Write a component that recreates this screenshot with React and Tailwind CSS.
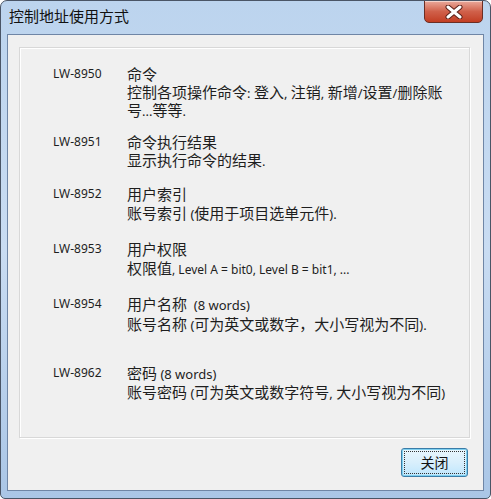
import React from "react";

const CJK = "font-['Microsoft_YaHei','Noto_Sans_CJK_SC','Noto_Sans',sans-serif]";
const LAT = "font-['Noto_Sans','Open_Sans','Noto_Sans_CJK_SC',sans-serif]";

function Row({ label, title, desc, rowClass, descClass }) {
  return (
    <div className={"flex " + rowClass}>
      <div className={"w-[107px] pl-[33px] shrink-0 h-[18px] text-[12px] leading-[18px] text-[#1e1e1e] " + LAT}>
        {label}
      </div>
      <div className={"w-[328px] text-[15px] leading-[18px] text-[#1e1e1e] " + CJK}>
        <div className="h-[18px]">{title}</div>
        <div className={descClass}>{desc}</div>
      </div>
    </div>
  );
}

function L({ children, size = "text-[13px]" }) {
  return <span className={LAT + " leading-none " + size}>{children}</span>;
}

export default function App() {
  return (
    <div className="w-[491px] h-[499px] relative overflow-hidden rounded-t-[7px] rounded-b-[5px] border border-[#4a5566] bg-gradient-to-b from-[#bcd4ee] via-[#c9dcf2] to-[#aac6e6] flex flex-col">
      {/* title bar */}
      <div className={"h-[33px] shrink-0 flex items-center pl-[8px] pb-[2px] text-[15px] text-[#111] " + CJK}>
        控制地址使用方式
      </div>
      {/* close button */}
      <div className="absolute left-[423px] top-[-1px] w-[59px] h-[23px] rounded-b-[5px] border border-[#6b2e24] bg-gradient-to-b from-[#e9a99b] via-[#d0604a] to-[#c23d22] flex items-center justify-center shadow-[inset_0_1px_0_rgba(255,255,255,0.5)]">
        <svg width="18" height="14" viewBox="0 0 18 14">
          <path d="M3 2 L15 12 M15 2 L3 12" stroke="#5a2018" strokeWidth="5" strokeLinecap="round" />
          <path d="M3 2 L15 12 M15 2 L3 12" stroke="#ffffff" strokeWidth="3" strokeLinecap="round" />
        </svg>
      </div>
      {/* client area */}
      <div className="mx-[6px] h-[457px] border border-[#6f86a6] bg-[#f0f0f0] flex flex-col">
        <div className="ml-[11px] mr-[13px] mt-[12px] h-[391px] border border-[#d8d8d8] shadow-[inset_1px_1px_0_#ffffff,1px_1px_0_#ffffff] bg-[#f0f0f0]">
          <div className="pt-[17px]">
            <Row
              label="LW-8950"
              title="命令"
              desc={<>控制各项操作命令<L>: </L>登入<L>, </L>注销<L>, </L>新增<L>/</L>设置<L>/</L>删除账号<L>...</L>等等<L>.</L></>}
              rowClass="mt-0"
              descClass="mt-0"
            />
            <Row label="LW-8951" title="命令执行结果" desc={<>显示执行命令的结果<L>.</L></>} rowClass="mt-[14px]" descClass="mt-0 h-[18px]" />
            <Row
              label="LW-8952"
              title="用户索引"
              desc={<>账号索引 <L>(</L>使用于项目选单元件<L>).</L></>}
              rowClass="mt-[16px]"
              descClass="mt-[1px] h-[18px]"
            />
            <Row
              label="LW-8953"
              title="用户权限"
              desc={<>权限值<L size="text-[12px]">, Level A = bit0, Level B = bit1, ...</L></>}
              rowClass="mt-[18px]"
              descClass="mt-[1px] h-[18px]"
            />
            <Row
              label="LW-8954"
              title={<>用户名称<L>&nbsp; (8 words)</L></>}
              desc={<>账号名称 <L>(</L>可为英文或数字，大小写视为不同<L>).</L></>}
              rowClass="mt-[18px]"
              descClass="mt-[2px] h-[18px]"
            />
            <Row
              label="LW-8962"
              title={<>密码<L> (8 words)</L></>}
              desc={<span className="whitespace-nowrap">账号密码 <L>(</L>可为英文或数字符号<L>,</L> 大小写视为不同<L>)</L></span>}
              rowClass="mt-[31px]"
              descClass="mt-[1px] h-[18px]"
            />
          </div>
        </div>
        <div className="flex justify-end mr-[15px] mt-[10px]">
          <div className="w-[67px] h-[29px] rounded-[3px] border border-[#3a7ca8] bg-gradient-to-b from-[#eaf6fd] via-[#d9effc] to-[#bee6fd] p-[2px] shadow-[inset_0_0_0_1px_#7fd0f0]">
            <div className={"w-full h-full border border-dotted border-[#333] flex items-center justify-center text-[14px] text-[#111] " + CJK}>
              关闭
            </div>
          </div>
        </div>
      </div>
    </div>
  );
}
